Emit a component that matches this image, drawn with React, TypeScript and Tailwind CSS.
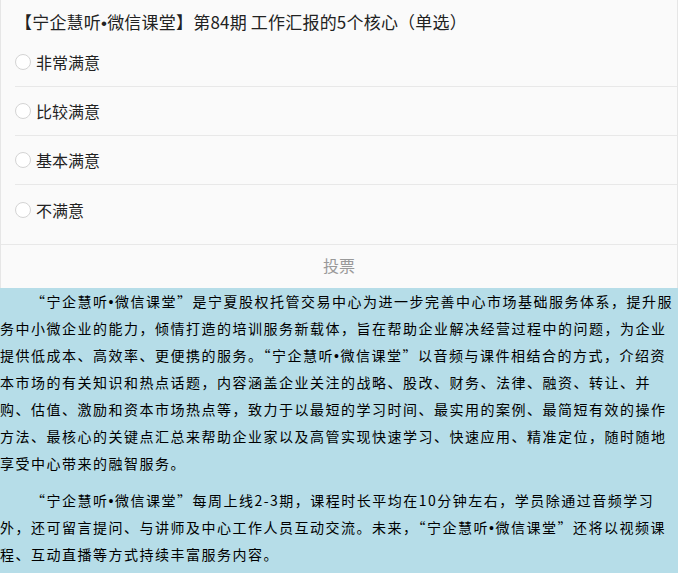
import React from 'react';

const OPTIONS = ['非常满意', '比较满意', '基本满意', '不满意'];

const cjk = { fontFamily: '"Noto Sans CJK SC", "Noto Sans", sans-serif' };

// narrow bullet, Noto CJK draws it full width
const Dot = () => <span className="font-['Liberation_Sans'] leading-none">•</span>;

const Brand = () => (
  <>
    宁企慧听<Dot />微信课堂
  </>
);

const App: React.FC = () => {
  return (
    <div className="w-[678px] bg-white" style={cjk}>
      {/* vote panel */}
      <div className="bg-[#fafafa] border-x border-[#e6e6e6]">
        <div className="h-[38px] pl-[14px] pt-[10px] text-[17px] leading-[24px] tracking-[0.2px] text-[#222]">
          【<Brand />】第84期 工作汇报的5个核心（单选）
        </div>
        <div>
          {OPTIONS.map((opt, i) => (
            <div
              key={opt}
              className={`ml-[14px] h-[49px] flex items-center gap-[5px] ${i < OPTIONS.length - 1 ? 'border-b border-[#e8e8e8]' : ''}`}
            >
              <span className="w-[16px] h-[16px] rounded-full border border-[#d4d4d4] bg-white shrink-0" />
              <span className="text-[16px] text-[#222]">{opt}</span>
            </div>
          ))}
        </div>
        <div className="h-[10px]" />
        <div className="border-t border-[#e8e8e8] h-[44px] pb-[4px] flex items-center justify-center text-[16px] text-[#999]">
          投票
        </div>
      </div>

      {/* intro text */}
      <div className="bg-[#b6dde8] text-black text-[14px] leading-[27px] tracking-[1.5px] pb-[6px]">
        <p className="indent-[31px] mb-[10px]">
          “<Brand />”是宁夏股权托管交易中心为进一步完善中心市场基础服务体系，提升服务中小微企业的能力，倾情打造的培训服务新载体，旨在帮助企业解决经营过程中的问题，为企业提供低成本、高效率、更便携的服务。“<Brand />”以音频与课件相结合的方式，介绍资本市场的有关知识和热点话题，内容涵盖企业关注的战略、股改、财务、法律、融资、转让、并购、估值、激励和资本市场热点等，致力于以最短的学习时间、最实用的案例、最简短有效的操作方法、最核心的关键点汇总来帮助企业家以及高管实现快速学习、快速应用、精准定位，随时随地享受中心带来的融智服务。
        </p>
        <p className="indent-[31px]">
          “<Brand />”每周上线2-3期，课程时长平均在10分钟左右，学员除通过音频学习外，还可留言提问、与讲师及中心工作人员互动交流。未来，“<Brand />”还将以视频课程、互动直播等方式持续丰富服务内容。
        </p>
      </div>
    </div>
  );
};

export default App;
